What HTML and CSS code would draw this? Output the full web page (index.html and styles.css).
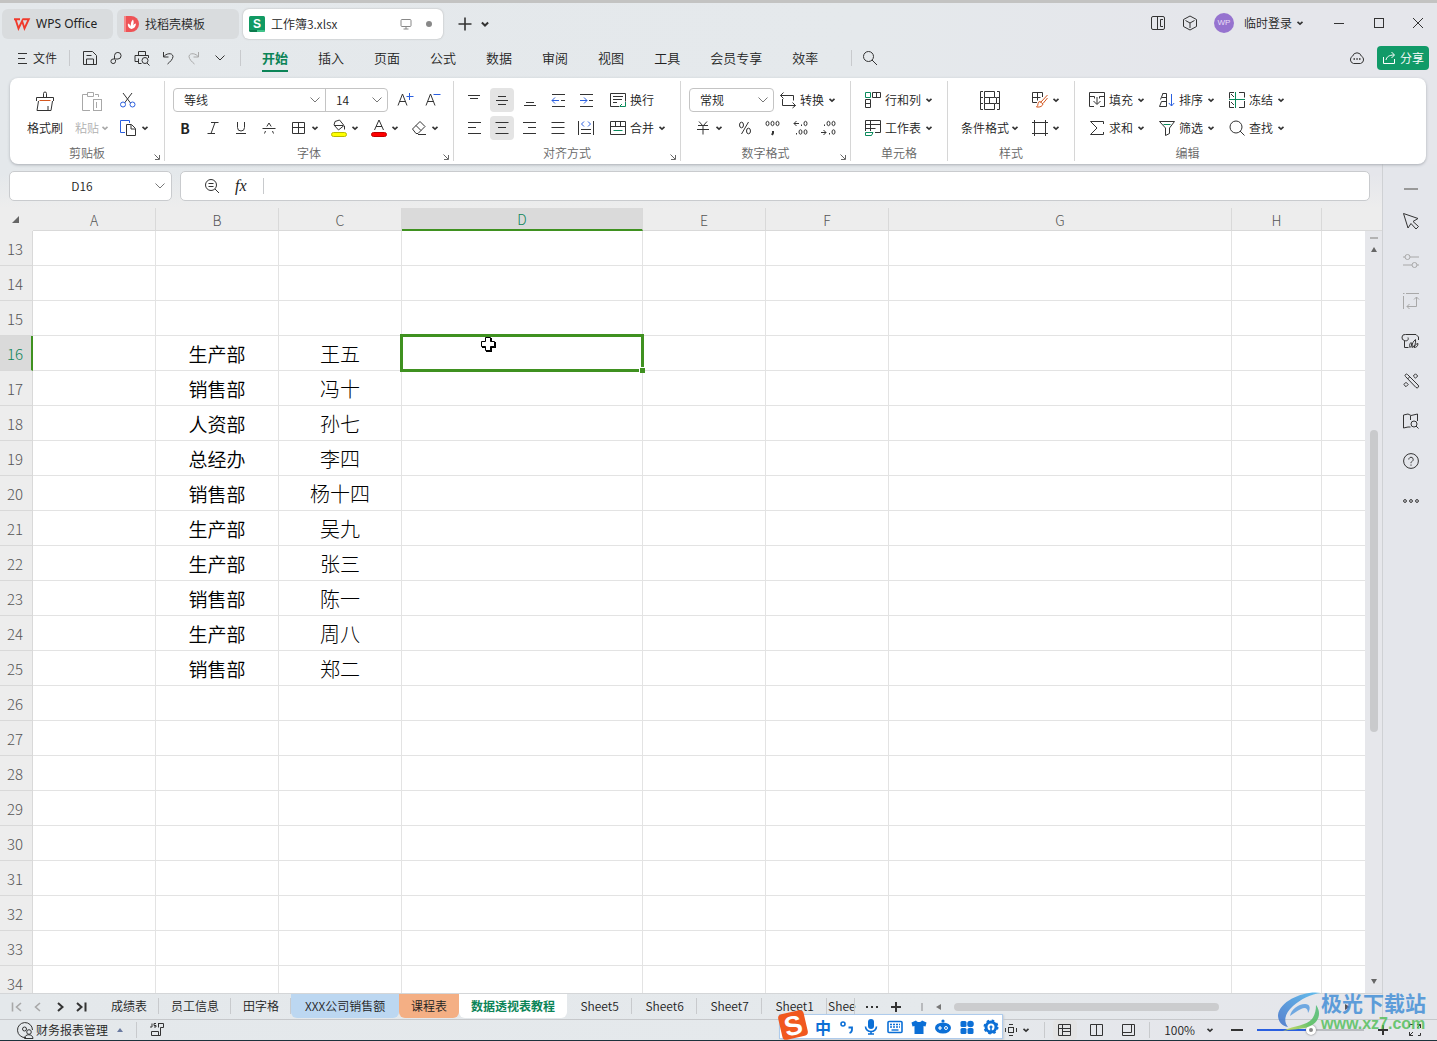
FILE: index.html
```html
<!DOCTYPE html>
<html lang="zh-CN">
<head>
<meta charset="utf-8">
<title>工作簿3.xlsx - WPS Office</title>
<link rel="stylesheet" href="styles.css">
</head>
<body>
<svg class="defs" aria-hidden="true">
  <symbol id="caret" viewBox="0 0 8 8"><path d="M1.5 2.8L4 5.2 6.5 2.8" stroke-width="1.6"/></symbol>
  <symbol id="chev" viewBox="0 0 12 12"><path d="M1.5 3.5L6 8l4.500-4.500"/></symbol>
  <symbol id="launch" viewBox="0 0 6 6"><path d="M.5 .5l4.500 4.500M5.500 1v4.500H1"/></symbol>
</svg>

<header class="titlebar">
  <button class="doc-tab tab-home">
    <svg width="16" height="12" viewBox="0 0 16 12"><path d="M0 1.200h6M1.500 1.200l3 9.300 3.600-7.500 2.400 7.500 4.300-9.300H8.500" stroke="#f03a2c" stroke-width="1.900"/></svg>
    <span>WPS Office</span>
  </button>
  <button class="doc-tab tab-docer">
    <svg width="16" height="16"><path d="M0 0h7a8 8 0 0 1 0 16H0z" fill="#ee5356" stroke="none"/><path d="M0 0h2v16H0z" fill="#f58b8b" stroke="none"/><path d="M7.500 13C4 12 3.500 9 4 7.500c1.500.5 2.500 1.500 3 3C6.500 8 7 5 9 3.500c1 2 .8 4 0 6 .8-1.200 1.800-1.800 3-2-.2 3-1.500 5-4.500 5.500z" fill="#fff" stroke="none"/></svg>
    <span>找稻壳模板</span>
  </button>
  <button class="doc-tab tab-file">
    <svg width="16" height="16"><rect width="16" height="16" rx="1.500" fill="#119a63" stroke="none"/><path d="M0 14h8v2H1.500z" fill="#0b7a4c" stroke="none"/><path d="M8 14h8l-1 2H8z" fill="#3fc389" stroke="none"/><text x="8" y="12" class="logo-s">S</text></svg>
    <span class="doc-name">工作簿3.xlsx</span>
    <svg class="dim" width="12" height="12"><rect x="1" y="1.500" width="10" height="7" rx="1"/><path d="M3.500 11h5M6 8.500V11"/></svg>
    <i class="dot"></i>
  </button>
  <button class="icon-btn new-tab" aria-label="新建"><svg width="14" height="14"><path d="M7 .5v13M.5 7h13" stroke-width="1.600"/></svg></button>
  <button class="icon-btn tab-list" aria-label="标签列表"><svg width="10" height="10"><use href="#caret"/></svg></button>
  <div class="window-tools">
    <button class="win-tool" aria-label="布局"><svg width="16" height="16"><rect x="1.500" y="1.500" width="13" height="13" rx="1.500"/><path d="M7.500 1.500v13M13 4.500h-2.500v7H13"/></svg></button>
    <button class="win-tool" aria-label="应用"><svg width="16" height="16"><path d="M8 1l6.500 3.500v7L8 15l-6.500-3.500v-7zM3.500 5.500L8 8l4.500-2.500M8 8v5"/></svg></button>
    <span class="avatar">WP</span>
    <button class="login">临时登录<svg width="8" height="8"><use href="#caret"/></svg></button>
    <button class="win-btn" aria-label="最小化"><svg width="12" height="12"><path d="M1 6.500h10"/></svg></button>
    <button class="win-btn" aria-label="最大化"><svg width="12" height="12"><rect x="1.500" y="1.500" width="9" height="9"/></svg></button>
    <button class="win-btn" aria-label="关闭"><svg width="12" height="12"><path d="M1 1l10 10M11 1L1 11"/></svg></button>
  </div>
</header>

<nav class="menubar">
  <button class="file-menu"><svg width="10" height="12"><path d="M1 1.500h9M1 6.500h7M1 11.500h9"/></svg>文件</button>
  <i class="bar"></i>
  <div class="quick">
    <button class="icon-btn" aria-label="保存"><svg width="16" height="16"><path d="M1.500 1.500h9l4 4v9h-13zM4.500 14v-5h7v5M4.500 5.500h5"/></svg></button>
    <button class="icon-btn" aria-label="输出"><svg width="14" height="14"><path d="M5.500 8V4.500a3.300 3.300 0 1 1 3.500 3.500H4a2.300 2.300 0 1 0 2.500 2.500V9"/></svg></button>
    <button class="icon-btn" aria-label="打印预览"><svg width="16" height="16"><path d="M4.500 5V1.500h7V5M4 11.500H1V5.500h13.500V8M4.500 8.500v5h3"/><circle cx="11" cy="10.500" r="3"/><path d="M13 13l2.500 2.500"/></svg></button>
    <button class="icon-btn" aria-label="撤销"><svg width="14" height="14"><path d="M2.500 1v5h5M2.500 6c2-3.500 9-5 9.500-.5C12 8 9 11 6.500 13"/></svg></button>
    <button class="icon-btn faint" aria-label="恢复"><svg width="14" height="14"><path d="M11.500 1v5h-5M11.500 6C9.500 2.500 2.500 1 2 5.500 2 8 5 11 7.500 13"/></svg></button>
    <button class="icon-btn" aria-label="更多"><svg width="12" height="12"><use href="#chev"/></svg></button>
  </div>
  <i class="bar"></i>
  <div class="menus">
    <a href="#" class="active">开始</a><a href="#">插入</a><a href="#">页面</a><a href="#">公式</a><a href="#">数据</a><a href="#">审阅</a><a href="#">视图</a><a href="#">工具</a><a href="#">会员专享</a><a href="#">效率</a>
  </div>
  <i class="bar"></i>
  <button class="icon-btn search" aria-label="搜索"><svg width="16" height="16"><circle cx="6.500" cy="6.500" r="5"/><path d="M10 10l5 5"/></svg></button>
  <button class="icon-btn cloud" aria-label="云同步"><svg width="16" height="14"><path d="M4.500 12.500a4 4 0 0 1-.8-7.500 4.500 4.500 0 0 1 8.600 0 4 4 0 0 1-.8 7.500z"/><path d="M4.500 8h1.500M7.300 8h1.500M10 8h1.500" stroke-width="1.400"/></svg></button>
  <button class="share"><svg width="14" height="14"><path d="M1.500 6v6.500h11V8M4 9c.5-3 3-5 8-5M9.500 1L12.500 4l-3 3"/></svg>分享</button>
</nav>

<section class="ribbon">
  <div class="group g-clip">
    <div class="tools">
      <button class="big"><svg width="20" height="20"><path d="M8.500 6.500V2.500a1.500 1.500 0 0 1 3 0v4M1.500 10V6.500h17V10M3.500 10l-1.500 9.500h14l1.500-9.500M13 15v4"/><path d="M4.500 9.500h11" stroke="#d4571f"/></svg><span>格式刷</span></button>
      <button class="big faint"><svg width="22" height="20"><path d="M7 3.500H1.500v16H9M14 3.500h3.500V6M6.500 1.500h6v4h-6z"/><rect x="12.500" y="8.500" width="8" height="11"/><path d="M15.500 11v6"/></svg><span>粘贴<svg width="8" height="8"><use href="#caret"/></svg></span></button>
      <div class="stack">
        <div class="row"><button class="tool" aria-label="剪切"><svg width="18" height="16"><path d="M4 1l7.500 10M13 1L5.500 11"/><circle cx="4" cy="12.500" r="2.500" stroke="#2a5fe0"/><circle cx="13.500" cy="12.500" r="2.500" stroke="#2a5fe0"/></svg></button></div>
        <div class="row"><button class="tool" aria-label="复制"><svg width="18" height="18"><path d="M6 13.500H1.500v-12h9V4" stroke="#2a5fe0"/><path d="M7.500 5.500h5l4 4v7h-9zM12 6v4h4"/></svg><svg width="8" height="8"><use href="#caret"/></svg></button></div>
      </div>
    </div>
    <div class="caption"><span>剪贴板</span><svg width="6" height="6"><use href="#launch"/></svg></div>
  </div>

  <div class="group g-font">
    <div class="tools stack">
      <div class="row">
        <div class="fontbox">
          <label class="pick font-name"><select aria-label="字体"><option>等线</option></select><svg width="12" height="12"><use href="#chev"/></svg></label>
          <label class="pick font-size"><select aria-label="字号"><option>14</option></select><svg width="12" height="12"><use href="#chev"/></svg></label>
        </div>
        <button class="sq" aria-label="增大字号"><svg width="16" height="16"><path d="M1 13.500L5.500 2 10 13.500M2.500 9.500h6"/><path d="M12.500 1v7M9.500 4.500h7" stroke="#2a5fe0"/></svg></button>
        <button class="sq" aria-label="减小字号"><svg width="16" height="16"><path d="M1 13.500L5.500 2 10 13.500M2.500 9.500h6"/><path d="M8.500 2.500h7" stroke="#2a5fe0"/></svg></button>
      </div>
      <div class="row">
        <button class="sq letter"><b>B</b></button>
        <button class="sq" aria-label="倾斜"><svg width="12" height="12"><path d="M4 .5h7.500M.5 11.500H8M8 .5L4 11.500"/></svg></button>
        <button class="sq" aria-label="下划线"><svg width="12" height="14"><path d="M2.500 1v5.500a3.500 3.500 0 0 0 7 0V1M1 12.500h10"/></svg></button>
        <button class="sq" aria-label="删除线"><svg width="14" height="12"><path d="M.5 6.500h13M4.800 4.500L7 1l2.200 3.500M3.500 9L2.500 11.500M10.500 9l1 2.500"/></svg></button>
        <button class="split" aria-label="边框"><svg width="16" height="16"><path d="M1.500 2.500h12v11h-12zM7.500 2.500v11M1.500 7.500h12"/></svg><svg width="8" height="8"><use href="#caret"/></svg></button>
        <button class="split" aria-label="填充颜色"><svg width="16" height="18"><path d="M4 2.500L8.500 1 13 6.500 7.500 11 3 6zM3 6.500h9M13.500 7v3.500"/><rect x=".5" y="13.500" width="15" height="4" rx="2" fill="#ff0" stroke="#b9b900"/></svg><svg width="8" height="8"><use href="#caret"/></svg></button>
        <button class="split" aria-label="字体颜色"><svg width="16" height="18"><path d="M3.500 11L8 1l4.500 10M5 7.500h6"/><rect x=".5" y="13.500" width="15" height="4" rx="2" fill="#f00" stroke="#c00000"/></svg><svg width="8" height="8"><use href="#caret"/></svg></button>
        <button class="split" aria-label="清除"><svg width="16" height="16"><path d="M9 1.500l5 5-7 7H5L1.500 9zM5 5.500l5 5M7 14.500h8"/></svg><svg width="8" height="8"><use href="#caret"/></svg></button>
      </div>
    </div>
    <div class="caption"><span>字体</span><svg width="6" height="6"><use href="#launch"/></svg></div>
  </div>

  <div class="group g-align">
    <div class="tools stack">
      <div class="row">
        <button class="al" aria-label="顶端对齐"><svg width="14" height="14"><path d="M1 2.500h12M3 5.500h8"/></svg></button>
        <button class="al on" aria-label="垂直居中"><svg width="14" height="14"><path d="M3 3.500h8M1 7.500h12M3 11.500h8"/></svg></button>
        <button class="al" aria-label="底端对齐"><svg width="14" height="14"><path d="M3 9.500h8M1 12.500h12"/></svg></button>
        <button class="al" aria-label="减少缩进"><svg width="14" height="14"><path d="M1 1.500h13M1 13.500h13M10 7.500h4"/><path d="M1 7.500h7M4 4.500L1 7.500l3 3" stroke="#2a5fe0"/></svg></button>
        <button class="al" aria-label="增加缩进"><svg width="14" height="14"><path d="M1 1.500h13M1 13.500h13M10 7.500h4"/><path d="M1 7.500h7M5 4.500l3 3-3 3" stroke="#2a5fe0"/></svg></button>
        <button class="tool wide"><svg width="16" height="16"><path d="M9 14.500H.5V1.500h15v8M3 4.500h10M3 7.500h9M3 10.500h4"/><path d="M15.500 10v4.500H10M12 12l-2.500 2.500" stroke="#0b8a5c"/></svg>换行</button>
      </div>
      <div class="row">
        <button class="al" aria-label="左对齐"><svg width="14" height="14"><path d="M1 1.500h13M1 6.500h8M1 12.500h13"/></svg></button>
        <button class="al on" aria-label="水平居中"><svg width="14" height="14"><path d="M.5 1.500h13M3 6.500h8M.5 12.500h13"/></svg></button>
        <button class="al" aria-label="右对齐"><svg width="14" height="14"><path d="M0 1.500h13M5 6.500h8M0 12.500h13"/></svg></button>
        <button class="al" aria-label="两端对齐"><svg width="14" height="14"><path d="M.5 1.500h13M.5 6.500h13M.5 12.500h13"/></svg></button>
        <button class="al" aria-label="分散对齐"><svg width="16" height="16"><path d="M.5 1v14M15.500 1v14M3 9.500h10M3 13.500h10"/><path d="M6 1.500L3.500 4 6 6.500M10 1.500L12.500 4 10 6.500" stroke="#2a5fe0"/></svg></button>
        <button class="tool wide"><svg width="16" height="14"><path d="M.5 .5h15v13H.5zM.5 5.500h15M5.500 .5v5M10.500 .5v5"/><path d="M3.500 9.500h9" stroke="#0b8a5c"/></svg>合并<svg width="8" height="8"><use href="#caret"/></svg></button>
      </div>
    </div>
    <div class="caption"><span>对齐方式</span><svg width="6" height="6"><use href="#launch"/></svg></div>
  </div>

  <div class="group g-number">
    <div class="tools stack">
      <div class="row">
        <label class="pick num-format"><select aria-label="数字格式"><option>常规</option></select><svg width="12" height="12"><use href="#chev"/></svg></label>
        <button class="tool convert"><svg width="16" height="16"><path d="M.5 3.500h13v5M3.500 .5l-3 3 3 3M2.500 7v6.500h13M12.500 10.500l3 3-3 2.500"/></svg>转换<svg width="8" height="8"><use href="#caret"/></svg></button>
      </div>
      <div class="row">
        <button class="split yen" aria-label="货币"><svg width="12" height="14"><path d="M2 .5l4 4.500 4-4.500M1 4.500h10M0 8.500h12M6 5v8.500"/></svg><svg width="8" height="8"><use href="#caret"/></svg></button>
        <button class="sq" aria-label="百分比"><svg width="14" height="14"><path d="M10.500 1L3.500 13"/><ellipse cx="3.500" cy="4" rx="2" ry="2.800"/><ellipse cx="10.500" cy="10" rx="2" ry="2.800"/></svg></button>
        <button class="sq" aria-label="千位分隔"><svg width="16" height="16"><ellipse cx="2.500" cy="3.500" rx="1.500" ry="2.200"/><ellipse cx="7.500" cy="3.500" rx="1.500" ry="2.200"/><ellipse cx="12.500" cy="3.500" rx="1.500" ry="2.200"/><path d="M8 11v2l-1 2" stroke-width="2"/></svg></button>
        <button class="sq" aria-label="增加小数位"><svg width="16" height="16"><path d="M1 3.500h5M3.500 1L1 3.500 3.500 6M8.500 4.500v1.500M3.500 13v1.500"/><ellipse cx="12.500" cy="3.500" rx="1.500" ry="2.200"/><ellipse cx="7.500" cy="12" rx="1.500" ry="2.200"/><ellipse cx="12.500" cy="12" rx="1.500" ry="2.200"/></svg></button>
        <button class="sq" aria-label="减少小数位"><svg width="16" height="16"><path d="M0 12.500h5M2.500 10L5 12.500 2.500 15M3.500 4.500v1.500M8.500 13v1.500"/><ellipse cx="7.500" cy="3.500" rx="1.500" ry="2.200"/><ellipse cx="12.500" cy="3.500" rx="1.500" ry="2.200"/><ellipse cx="12.500" cy="12" rx="1.500" ry="2.200"/></svg></button>
      </div>
    </div>
    <div class="caption"><span>数字格式</span><svg width="6" height="6"><use href="#launch"/></svg></div>
  </div>

  <div class="group g-cells">
    <div class="tools stack">
      <div class="row"><button class="tool"><svg width="16" height="16"><path d="M7.500 .5h8v5h-8zM11.500 .5v5M.5 7.500h5v8h-5zM.5 11.500h5"/><path d="M.5 .5h5v5h-5z" stroke="#0b8a5c"/></svg>行和列<svg width="8" height="8"><use href="#caret"/></svg></button></div>
      <div class="row"><button class="tool"><svg width="16" height="16"><path d="M.5 11V.5h15v12H10M.5 4.500h15M5.500 .5V11M.5 8.500h10"/><path d="M.5 12.500H8L6.500 15.500h-6z" stroke="#0b8a5c"/></svg>工作表<svg width="8" height="8"><use href="#caret"/></svg></button></div>
    </div>
    <div class="caption"><span>单元格</span></div>
  </div>

  <div class="group g-style">
    <div class="tools">
      <button class="big"><svg width="20" height="20"><path d="M3 .5H.5v18H3M17 .5h2.500v18H17M.5 6.500H3M.5 12.500H3M17 6.500h2.500M17 12.500h2.500M4.500 .5h10v6h-10zM4.500 12.500h10v6h-10zM4.500 6.500v6M9.500 6.500v6M14.500 6.500h2v6h-2"/></svg><span>条件格式<svg width="8" height="8"><use href="#caret"/></svg></span></button>
      <div class="stack">
        <div class="row"><button class="tool" aria-label="单元格样式"><svg width="16" height="16"><path d="M5 10.500H.5V.5h10V5M.5 5.500h8M5.500 .5v8"/><path d="M15.500 3l-7 7.500M15.500 6L11 11.500M8 9.500c-3 0-1 4-3.500 5.500 4 .5 6-1 6.500-3z" stroke="#d4571f"/></svg><svg width="8" height="8"><use href="#caret"/></svg></button></div>
        <div class="row"><button class="tool" aria-label="表格样式"><svg width="16" height="16"><path d="M2.500 0v16M13.500 0v16M0 2.500h16M0 13.500h16"/></svg><svg width="8" height="8"><use href="#caret"/></svg></button></div>
      </div>
    </div>
    <div class="caption"><span>样式</span></div>
  </div>

  <div class="group g-edit">
    <div class="tools stack">
      <div class="row">
        <button class="tool"><svg width="16" height="16"><path d="M5 14.500H.5v-14h15v14H11M.5 4.500h5M10.500 4.500h5M5.500 4.500v2M10.500 4.500v2M8 5v7M4.500 9L8 12.500 11.500 9"/></svg>填充<svg width="8" height="8"><use href="#caret"/></svg></button>
        <button class="tool"><svg width="16" height="16"><path d="M3.500 1.500h4v13M1.500 7.500L4 1.500M3 5.500h4.500M2.500 9.500h5M.5 14.500l2-5M.5 14.500h7"/><path d="M12.500 2v12M9.800 11l2.700 3 2.700-3" stroke="#2a5fe0"/></svg>排序<svg width="8" height="8"><use href="#caret"/></svg></button>
        <button class="tool"><svg width="16" height="16"><path d="M5 .5H.5v6M10 .5h5.500v5M.5 9v6.500H5M10 15.500h5.500V9M2 2l3 3M2 10l3 3"/><path d="M0 7.500h16M6.500 0v16" stroke="#0b8a5c"/></svg>冻结<svg width="8" height="8"><use href="#caret"/></svg></button>
      </div>
      <div class="row">
        <button class="tool"><svg width="16" height="16"><path d="M14.500 4V1.500h-13L8 8l-6.500 6.500h13V12"/></svg>求和<svg width="8" height="8"><use href="#caret"/></svg></button>
        <button class="tool"><svg width="16" height="16"><path d="M.5 1.500h15L10.500 8v5.500l-4 2V8z"/><path d="M4.500 4.500h7" stroke="#0b8a5c"/></svg>筛选<svg width="8" height="8"><use href="#caret"/></svg></button>
        <button class="tool"><svg width="16" height="16"><circle cx="7" cy="7" r="6"/><path d="M11 11l4.500 4.500"/></svg>查找<svg width="8" height="8"><use href="#caret"/></svg></button>
      </div>
    </div>
    <div class="caption"><span>编辑</span></div>
  </div>
</section>

<main class="work">
  <div class="book">
    <div class="formula">
      <label class="namebox"><input type="text" value="D16" aria-label="名称框"><svg width="12" height="12"><use href="#chev"/></svg></label>
      <label class="fxbox">
        <svg width="16" height="16"><circle cx="7" cy="7" r="5.500"/><path d="M4.500 5.500h5M4.500 8.500h5M11 11l4 4"/></svg>
        <em>fx</em><i class="bar"></i>
        <input type="text" aria-label="编辑栏">
      </label>
    </div>
    <div class="sheet">
      <div class="grid">
        <table>
          <colgroup><col class="c-num"><col class="c-s"><col class="c-s"><col class="c-s"><col class="c-d"><col class="c-s"><col class="c-s"><col class="c-g"><col class="c-h"><col></colgroup>
          <thead><tr><th><svg width="8" height="8"><path d="M7 0v7H0z" fill="#666" stroke="none"/></svg></th><th>A</th><th>B</th><th>C</th><th class="sel">D</th><th>E</th><th>F</th><th>G</th><th>H</th><th></th></tr></thead>
          <tbody>
            <tr><th>13</th><td></td><td></td><td></td><td></td><td></td><td></td><td></td><td></td><td></td></tr>
            <tr><th>14</th><td></td><td></td><td></td><td></td><td></td><td></td><td></td><td></td><td></td></tr>
            <tr><th>15</th><td></td><td></td><td></td><td></td><td></td><td></td><td></td><td></td><td></td></tr>
            <tr><th class="sel">16</th><td></td><td>生产部</td><td>王五</td><td class="current"><div class="cursor-box"><i class="handle"></i><svg class="pointer" width="16" height="16"><path d="M6 2h6v4h4v6h-4v4H6v-4H2V6h4z" fill="#000" stroke="none"/><path d="M5.500 1.500h5v4h4v5h-4v4h-5v-4h-4v-5h4z" fill="#fff" stroke="#000"/></svg></div></td><td></td><td></td><td></td><td></td><td></td></tr>
            <tr><th>17</th><td></td><td>销售部</td><td>冯十</td><td></td><td></td><td></td><td></td><td></td><td></td></tr>
            <tr><th>18</th><td></td><td>人资部</td><td>孙七</td><td></td><td></td><td></td><td></td><td></td><td></td></tr>
            <tr><th>19</th><td></td><td>总经办</td><td>李四</td><td></td><td></td><td></td><td></td><td></td><td></td></tr>
            <tr><th>20</th><td></td><td>销售部</td><td>杨十四</td><td></td><td></td><td></td><td></td><td></td><td></td></tr>
            <tr><th>21</th><td></td><td>生产部</td><td>吴九</td><td></td><td></td><td></td><td></td><td></td><td></td></tr>
            <tr><th>22</th><td></td><td>生产部</td><td>张三</td><td></td><td></td><td></td><td></td><td></td><td></td></tr>
            <tr><th>23</th><td></td><td>销售部</td><td>陈一</td><td></td><td></td><td></td><td></td><td></td><td></td></tr>
            <tr><th>24</th><td></td><td>生产部</td><td>周八</td><td></td><td></td><td></td><td></td><td></td><td></td></tr>
            <tr><th>25</th><td></td><td>销售部</td><td>郑二</td><td></td><td></td><td></td><td></td><td></td><td></td></tr>
            <tr><th>26</th><td></td><td></td><td></td><td></td><td></td><td></td><td></td><td></td><td></td></tr>
            <tr><th>27</th><td></td><td></td><td></td><td></td><td></td><td></td><td></td><td></td><td></td></tr>
            <tr><th>28</th><td></td><td></td><td></td><td></td><td></td><td></td><td></td><td></td><td></td></tr>
            <tr><th>29</th><td></td><td></td><td></td><td></td><td></td><td></td><td></td><td></td><td></td></tr>
            <tr><th>30</th><td></td><td></td><td></td><td></td><td></td><td></td><td></td><td></td><td></td></tr>
            <tr><th>31</th><td></td><td></td><td></td><td></td><td></td><td></td><td></td><td></td><td></td></tr>
            <tr><th>32</th><td></td><td></td><td></td><td></td><td></td><td></td><td></td><td></td><td></td></tr>
            <tr><th>33</th><td></td><td></td><td></td><td></td><td></td><td></td><td></td><td></td><td></td></tr>
            <tr><th>34</th><td></td><td></td><td></td><td></td><td></td><td></td><td></td><td></td><td></td></tr>
          </tbody>
        </table>
      </div>
      <div class="vscroll">
        <i class="splitter"></i>
        <svg width="8" height="6"><path d="M4 0l3 5H1z" fill="#666" stroke="none"/></svg>
        <div class="vtrack"><i class="vthumb"></i></div>
        <svg width="8" height="6"><path d="M4 5l3-5H1z" fill="#666" stroke="none"/></svg>
      </div>
    </div>
    <div class="sheetbar">
      <div class="sheet-nav">
        <button class="faint" aria-label="第一个"><svg width="12" height="12"><path d="M2.500 1.500v9M11 2L6.500 6l4.500 4" stroke-width="1.600"/></svg></button>
        <button class="faint" aria-label="上一个"><svg width="12" height="12"><path d="M8 2L3.500 6 8 10" stroke-width="1.600"/></svg></button>
        <button aria-label="下一个"><svg width="12" height="12"><path d="M4 2l4.500 4L4 10" stroke-width="2"/></svg></button>
        <button aria-label="最后一个"><svg width="12" height="12"><path d="M1 2l4.500 4L1 10M9.500 1.500v9" stroke-width="2"/></svg></button>
      </div>
      <div class="sheet-tabs">
        <button>成绩表</button><button>员工信息</button><button>田字格</button><button class="blue">XXX公司销售额</button><button class="orange">课程表</button><button class="active">数据透视表教程</button><button class="latin">Sheet5</button><button class="latin">Sheet6</button><button class="latin">Sheet7</button><button class="latin">Sheet1</button><button class="cut">Shee</button>
      </div>
      <button class="icon-btn more" aria-label="更多工作表"><svg width="14" height="4"><path d="M1 2h2M6 2h2M11 2h2" stroke-width="2"/></svg></button>
      <button class="icon-btn add" aria-label="新建工作表"><svg width="10" height="10"><path d="M5 0v10M0 5h10" stroke-width="2"/></svg></button>
      <i class="grip"></i>
      <svg class="larrow" width="6" height="8"><path d="M0 4l5-3v6z" fill="#777" stroke="none"/></svg>
      <div class="htrack"><i class="hthumb"></i></div>
      <svg class="rarrow" width="6" height="8"><path d="M6 4L1 1v6z" fill="#555" stroke="none"/></svg>
    </div>
  </div>
  <aside class="side">
    <button class="collapse" aria-label="收起"><svg width="14" height="2"><path d="M0 1h14" stroke="#999" stroke-width="2"/></svg></button>
    <button aria-label="选择"><svg width="18" height="18"><path d="M1.500 1.500l14.500 5-5 3 5.500 5-2.500 2.500-5-5.500-3 4.500z"/></svg></button>
    <button class="faint" aria-label="属性"><svg width="16" height="16"><circle cx="4.500" cy="4" r="2.500"/><circle cx="11.500" cy="12" r="2.500"/><path d="M0 4h2M7 4h9M0 12h9M14 12h2"/></svg></button>
    <button class="faint" aria-label="分析"><svg width="16" height="16"><path d="M0 .5h1.500M3 .5h13M.5 3v13M13.500 4v9.500H4M11 6.500l2.500-2.500L16 6.500M6.500 11L4 13.500 6.500 16"/></svg></button>
    <button aria-label="资源"><svg width="16" height="16"><path d="M1.500 7.500v7h4M1.500 7.500a3 3 0 0 1 1-6H13l2.500 2.500v3M1.500 7.500C4 8.500 6 7 5 4.500M7 14.500c-1-3 0-4 1-5 1 2 .8 3.500-1 5zM9 14.500c0-4 1-6 3.500-8 .5 4-.5 6.500-3.500 8zM11 14.500c1-2.500 2-3.500 4-4 0 2.500-1.500 4-4 4z"/></svg></button>
    <button aria-label="智能工具"><svg width="16" height="16"><path d="M2.500 3.500a1.400 1.400 0 0 1 2-2L15 12a1.400 1.400 0 0 1-2 2.500zM4.500 6l2-2"/><path d="M12.500 .8l2.200 2.200-2.200 2.200L10.300 3zM3 9.300l2.200 2.200L3 13.700.8 11.500z"/></svg></button>
    <button aria-label="查阅"><svg width="16" height="16"><path d="M7.500 14H5l-4.500 1V2L5 1l3 1.500L14.500 1v7M7.500 3v4"/><circle cx="11" cy="11" r="3"/><path d="M13 13l2.500 2.500"/></svg></button>
    <button aria-label="帮助"><svg width="16" height="16"><circle cx="8" cy="8" r="7.400"/><path d="M5.800 6.500a2.200 2.200 0 1 1 3.400 1.800C8.200 9 8 9.300 8 10.200M8 11.500v1.200"/></svg></button>
    <button aria-label="更多"><svg width="16" height="6"><circle cx="2" cy="3" r="1.400"/><circle cx="8" cy="3" r="1.400"/><circle cx="14" cy="3" r="1.400"/></svg></button>
  </aside>
</main>

<footer class="status">
  <button class="finance"><svg width="18" height="18"><path d="M10 16.500A7.500 7.500 0 1 1 16.500 9"/><circle cx="8.500" cy="8" r="2"/><circle cx="13" cy="11" r="2.300"/><path d="M8.500 17.500c0-5 8.500-5 8.500 0z"/></svg>财务报表管理<svg class="up" width="8" height="6"><path d="M4 1l3 4H1z" fill="#6a7aa0" stroke="none"/></svg></button>
  <i class="bar"></i>
  <button class="icon-btn script" aria-label="脚本"><svg width="14" height="14"><path d="M2 .5V4H0M6 .5H4v2h2V4H4M8 .5h5.500v4h-3v8H1.500V8.500h7v4M8.500 .5v4"/></svg></button>
  <div class="views">
    <button class="focus" aria-label="阅读模式"><svg width="14" height="14"><rect x="4.500" y="4.500" width="5" height="5"/><path d="M5 1.500h4M5 12.500h4M12.500 5v4M1.500 5v4"/></svg><svg width="8" height="8"><use href="#caret"/></svg></button>
    <i class="bar"></i>
    <button class="view on" aria-label="普通视图"><svg width="14" height="12"><path d="M.5 .5h12v11H.5zM.5 4.500h12M4.500 .5v11M4.500 7.500h8"/></svg></button>
    <button class="view" aria-label="分页预览"><svg width="14" height="12"><path d="M.5 .5h12v11H.5zM6.500 .5v11"/></svg></button>
    <button class="view" aria-label="页面布局"><svg width="14" height="12"><path d="M.5 .5h12v11H.5zM.5 8.500h9v-8"/></svg></button>
    <i class="bar"></i>
    <button class="zoom">100%<svg width="8" height="8"><use href="#caret"/></svg></button>
    <button class="icon-btn minus" aria-label="缩小"><svg width="12" height="2"><path d="M0 1h12" stroke-width="2"/></svg></button>
    <input type="range" min="0" max="100" value="50" aria-label="缩放">
    <button class="icon-btn plus" aria-label="放大"><svg width="10" height="10"><path d="M5 0v10M0 5h10" stroke-width="2"/></svg></button>
    <button class="icon-btn full" aria-label="全屏"><svg width="14" height="14"><path d="M9 1.500h3.500V5M12.500 1.500L9 5M5 12.500H1.500V9M1.500 12.500L5 9M1.500 4V1.500H5M12.500 10v2.500H10"/></svg></button>
  </div>
</footer>

<div class="ime">
  <svg class="ime-logo" width="32" height="30"><g transform="rotate(-13 16 15)"><rect x="3" y="2" width="26" height="26" rx="4" fill="#f1581f" stroke="none"/><text x="16" y="25" class="ime-s">S</text></g></svg>
  <b>中</b>
  <svg width="16" height="16"><circle cx="4" cy="5" r="2" stroke="#0b6fd6" stroke-width="1.600"/><path d="M9.500 8.500h3.500v2c0 2-1 3-2.500 3.500" stroke="#0b6fd6" stroke-width="1.800"/></svg>
  <svg width="16" height="16"><rect x="5" y="0" width="6" height="10" rx="3" fill="#0b6fd6" stroke="none"/><path d="M2.500 7.500a5.500 5 0 0 0 11 0M8 12.500V15M5 15h6" stroke="#0b6fd6" stroke-width="1.600"/></svg>
  <svg width="16" height="16"><rect x="1" y="2.500" width="14" height="11" rx="1" stroke="#0b6fd6" stroke-width="1.600"/><path d="M3 5.500h10M3 8h10" stroke="#0b6fd6" stroke-width="1.600" stroke-dasharray="2 1"/><path d="M4.500 11h7" stroke="#0b6fd6" stroke-width="1.400"/></svg>
  <svg width="16" height="16"><path d="M5 1.500c1.500 2 4.500 2 6 0l4.500 2-1 4-2-.5V15h-9V7l-2 .5-1-4z" fill="#0b6fd6" stroke="none"/></svg>
  <svg width="16" height="16"><circle cx="8" cy="2" r="1.600" fill="#0b6fd6" stroke="none"/><ellipse cx="8" cy="9" rx="8" ry="5.500" fill="#0b6fd6" stroke="none"/><path d="M3 9h4M5 7v4" stroke="#fff" stroke-width="1.200"/><circle cx="11" cy="9" r="1.500" stroke="#fff"/></svg>
  <svg width="16" height="16"><g fill="#0b6fd6" stroke="none"><rect x="1.500" y="2" width="6" height="6" rx="1.500"/><circle cx="11.500" cy="5" r="3.300"/><rect x="1.500" y="9" width="6" height="6" rx="1.500"/><rect x="8.500" y="9" width="6" height="6" rx="1.500"/></g></svg>
  <svg width="16" height="16"><circle cx="8" cy="8" r="5" stroke="#0b6fd6" stroke-width="3"/><circle cx="8" cy="8" r="6.500" stroke="#0b6fd6" stroke-width="2" stroke-dasharray="2.500 2.600"/><path d="M8 6.500v8M6.500 8h3" stroke="#0b6fd6" stroke-width="1.600"/></svg>
</div>

<div class="mark">
  <svg width="44" height="42"><defs><linearGradient id="leaf" x1="0" y1="1" x2="1" y2="0"><stop offset="0" stop-color="#d9dc4a"/><stop offset=".5" stop-color="#55bf5c"/><stop offset="1" stop-color="#4dbb78"/></linearGradient><linearGradient id="wave" x1="0" y1="1" x2="1" y2="0"><stop offset="0" stop-color="#3f6fc9"/><stop offset="1" stop-color="#4db8ee"/></linearGradient></defs>
    <path d="M43 2C28-1 2 9 0 24c0 7 4 11 10 12-5-6-3-14 5-21C23 8 33 3 43 2z" fill="url(#wave)" stroke="none"/>
    <path d="M12 25c1-6 8-12 15-12 5 0 6 4 3 9 0-5-3-6-7-4s-7 4-11 7z" fill="#5b9ee0" stroke="none"/>
    <path d="M38 14c6 8 3 18-8 22-8 3-18 2-25 4 12-6 23-5 29-12 3-4 4-9 4-14z" fill="url(#leaf)" stroke="none"/>
  </svg>
  <div><strong>极光下载站</strong><span>www.xz7.com</span></div>
</div>
</body>
</html>
```
FILE: styles.css
```css
* { box-sizing: border-box; }
html, body { height: 100%; }
body {
  margin: 0;
  display: flex;
  flex-direction: column;
  position: relative;
  overflow: hidden;
  border-top: 3px solid #c3c3c2;
  border-bottom: 1px solid #1d333d;
  background: linear-gradient(90deg, #e4e8eb 0%, #e5e9ec 60%, #e5e6eb 85%);
  color: #222;
  font: 350 12px/16px "Noto Sans CJK SC", sans-serif;
}
button, input, select { font: inherit; color: inherit; border: 0; padding: 0; margin: 0; background: none; outline: 0; }
button { display: flex; align-items: center; justify-content: center; flex: none; white-space: nowrap; }
a { color: inherit; text-decoration: none; }
svg { display: block; flex: none; fill: none; stroke: #333; stroke-width: 1; overflow: visible; }
.defs { position: absolute; width: 0; height: 0; }
.bar { flex: none; width: 1px; height: 16px; background: #c8cacd; }
.faint { color: #b0b0b0; }
.faint svg { stroke: #a8a8a8; }
.dim { stroke: #888; }

/* title bar */
.titlebar { flex: none; display: flex; align-items: center; height: 39px; padding: 3px 0 0 2px; }
.doc-tab { height: 30px; border-radius: 6px; background: #d9dcde; justify-content: flex-start; }
.tab-home { width: 111px; padding-left: 12px; gap: 6px; margin-right: 4px; font-family: "Noto Sans", sans-serif; font-weight: 400; }
.tab-docer { width: 122px; padding-left: 7px; gap: 5px; margin-right: 4px; }
.tab-file { width: 200px; padding: 0 11px 0 6px; gap: 6px; background: #fff; box-shadow: 0 0 2px #aaa; }
.doc-name { flex: 1; text-align: left; }
.tab-file .dim { margin-right: 4px; }
.dot { width: 6px; height: 6px; border-radius: 50%; background: #888; margin-left: 4px; }
.logo-s { font: bold 12px "Liberation Sans", sans-serif; fill: #fff; stroke: none; text-anchor: middle; }
.new-tab { width: 28px; margin-left: 8px; }
.tab-list { width: 12px; }
.window-tools { margin-left: auto; display: flex; align-items: center; padding-bottom: 2px; }
.win-tool { width: 32px; height: 32px; }
.avatar { width: 20px; height: 20px; margin: 0 10px 0 8px; border-radius: 50%; background: #9673cf; color: #e8def7; font: 8px/20px "Liberation Sans", sans-serif; text-align: center; }
.login { gap: 4px; margin-right: 15px; }
.win-btn { width: 40px; height: 32px; }
.win-btn:last-child { width: 38px; }

/* menu bar */
.menubar { flex: none; display: flex; align-items: center; height: 36px; padding: 0 8px 4px 17px; }
.file-menu { gap: 6px; margin-right: 12px; }
.quick { display: flex; margin: 0 7px 0 7px; }
.quick button { width: 26px; height: 24px; }
.menus { display: flex; gap: 30px; margin: 0 33px 0 21px; font-size: 13px; }
.menus a { line-height: 24px; border-bottom: 2px solid transparent; margin-top: 2px; }
.menus .active { color: #0b8457; font-weight: bold; border-color: #0b8457; }
.search { width: 36px; }
.cloud { margin-left: auto; margin-right: 12px; }
.share { width: 52px; height: 24px; gap: 4px; border-radius: 4px; background: #119a68; color: #fff; }
.share svg { stroke: #fff; }

/* ribbon */
.ribbon { flex: none; display: flex; height: 86px; margin: 0 11px 0 10px; border-radius: 8px; background: #fff; box-shadow: 0 1px 3px #a9adb3; position: relative; z-index: 1; }
.group { flex: none; display: flex; flex-direction: column; border-right: 1px solid transparent; border-image: linear-gradient(transparent 4px, #d6d6d6 4px, #d6d6d6 82px, transparent 82px) 1; }
.group:last-child { border-image: none; }
.g-clip { width: 155px; }
.g-font { width: 289px; }
.g-align { width: 227px; }
.g-number { width: 170px; }
.g-cells { width: 97px; }
.g-style { width: 127px; }
.g-edit { width: 226px; }
.tools { display: flex; height: 64px; padding-top: 8px; }
.g-clip .tools, .g-cells .tools, .g-edit .tools { padding-left: 14px; }
.g-font .tools { padding-left: 6px; }
.g-align .tools, .g-number .tools { padding-left: 8px; }
.g-style .tools { padding-left: 10px; }
.stack { display: flex; flex-direction: column; }
.row { display: flex; align-items: center; height: 28px; }
.caption { display: grid; height: 22px; line-height: 22px; color: #666; }
.caption > * { grid-area: 1 / 1; justify-self: center; }
.caption svg { justify-self: end; align-self: center; stroke: #666; margin: 7px 4px 0 0; }
.big { flex-direction: column; height: 56px; justify-content: flex-start; padding: 5px 3px 0; }
.big > span { display: flex; align-items: center; gap: 2px; height: 16px; margin-top: 9px; }
.g-clip .big + .big { margin-left: 6px; }
.g-clip .big + .stack { margin-left: 7px; }
.g-style .big + .stack { margin-left: 10px; }
.tool { gap: 4px; height: 24px; }
.sq { width: 28px; height: 24px; }
.letter { font-size: 14px; }
.split { width: 40px; height: 24px; padding-left: 8px; gap: 4px; justify-content: flex-start; }
.g-align .row { gap: 4px; }
.al { width: 24px; height: 24px; border-radius: 4px; }
.on { background: #e4e4e4; }
.wide { padding-left: 8px; }
.fontbox { display: flex; margin: 0 3px 0 2px; border: 1px solid #c4c4c4; border-radius: 4px; }
.pick { display: grid; align-items: center; height: 24px; }
.pick > * { grid-area: 1 / 1; }
.pick select { appearance: none; width: 100%; height: 100%; padding-left: 10px; }
.pick svg { justify-self: end; margin-right: 4px; stroke: #777; pointer-events: none; }
.fontbox .pick { height: 22px; }
.font-name { width: 152px; border-right: 1px solid #c4c4c4; }
.font-size { width: 61px; }
.num-format { width: 85px; border: 1px solid #c4c4c4; border-radius: 4px; margin-right: 6px; }
.yen { width: 42px; gap: 6px; }
.g-edit .tool { width: 70px; justify-content: flex-start; }

/* work area */
.work { flex: 1; min-height: 0; display: flex; }
.book { flex: 1; min-width: 0; display: flex; flex-direction: column; background: linear-gradient(transparent 0, transparent 10px, #ededed 44px); }
.formula { flex: none; display: flex; gap: 8px; padding: 7px 12px 7px 9px; }
.namebox, .fxbox { display: flex; align-items: center; height: 30px; border: 1px solid #c9cbce; border-radius: 5px; background: #fff; }
.namebox { width: 163px; padding-right: 5px; }
.namebox input { flex: 1; min-width: 0; text-align: center; }
.namebox svg { stroke: #777; }
.fxbox { flex: 1; padding-left: 23px; }
.fxbox em { width: 16px; margin: 0 12px 0 15px; font: italic 16px/20px "Liberation Serif", serif; }
.fxbox input { flex: 1; }
.sheet { flex: 1; min-height: 0; display: flex; overflow: hidden; }
.grid { flex: 1; min-width: 0; overflow: hidden; }
table { width: 100%; table-layout: fixed; border-collapse: separate; border-spacing: 0; background: #fff; }
.c-num { width: 33px; }
.c-s { width: 123px; }
.c-d { width: 241px; }
.c-g { width: 343px; }
.c-h { width: 90px; }
th, td { padding: 0; border-right: 1px solid #e3e3e3; border-bottom: 1px solid #e3e3e3; text-align: center; overflow: hidden; }
th:last-child, td:last-child { border-right: 0; }
th { background: #ededed; color: #555; font-size: 15px; font-weight: 300; border-color: #d9d9d9; }
thead th { height: 23px; line-height: 20px; font-size: 14px; padding-top: 2px; }
thead th:first-child { border-color: transparent; }
thead th svg { margin: 0 auto; }
thead .sel { background: #dadada; color: #0b8457; border-bottom: 2px solid #3f9120; line-height: 19px; }
tbody th { height: 35px; line-height: 20px; padding: 1px 2px 0 0; }
tbody .sel { background: #dadada; color: #0b8457; border-right: 2px solid #3f9120; padding-right: 1px; }
td { color: #000; font-size: 19px; line-height: 28px; padding-top: 2px; }
td:nth-child(4) { font-size: 20px; font-weight: 300; }
.current { position: relative; overflow: visible; padding: 0; }
.cursor-box { position: absolute; inset: -2px; border: 3px solid #3f9120; }
.handle { position: absolute; right: -4px; bottom: -4px; width: 6px; height: 6px; background: #3f9120; border: solid #fff; border-width: 1px 0 0 1px; }
.pointer { position: absolute; left: 77px; top: -1px; }
.vscroll { width: 17px; margin-top: 23px; display: flex; flex-direction: column; align-items: center; background: #e6e7eb; box-shadow: 0 -1px #d9d9d9; padding: 6px 0 8px; }
.splitter { width: 8px; height: 2px; background: #b3b3b3; margin-bottom: 8px; }
.vtrack { flex: 1; padding-top: 177px; }
.vthumb { display: block; width: 8px; height: 302px; border-radius: 4px; background: #c9cacc; }

/* sheet tabs */
.sheetbar { flex: none; display: flex; align-items: center; height: 26px; border-top: 1px solid #d4d6d8; background: linear-gradient(90deg, #e4e8eb 0%, #e5e9ec 70%, #e5e6eb 100%); }
.sheet-nav { display: flex; width: 99px; padding-left: 5px; }
.sheet-nav button { width: 22px; height: 24px; }
.sheet-tabs { display: flex; align-self: stretch; }
.sheet-tabs button { height: 24px; padding: 0 12px; position: relative; border-radius: 0 0 6px 6px; }
.sheet-tabs button:not(.blue, .orange, .active)::after { content: ""; position: absolute; right: 0; top: 4px; width: 1px; height: 16px; background: #c8cacd; }
.sheet-tabs .blue { min-width: 108px; background: #bcd7f1; }
.sheet-tabs .orange { background: #f4af84; }
.sheet-tabs .active { background: #fff; color: #0b8457; font-weight: bold; }
.sheet-tabs .latin { width: 65px; }
.sheet-tabs .cut { width: 28px; padding: 0 0 0 1px; justify-content: flex-start; }
.more { width: 34px; }
.add { width: 14px; }
.grip { width: 2px; height: 8px; margin: 0 13px 0 18px; background: #b8babd; }
.htrack { flex: 1; margin-left: 12px; }
.hthumb { display: block; width: 68%; height: 8px; border-radius: 4px; background: #cbccce; }
.rarrow { margin-right: 32px; }

/* side pane */
.side { flex: none; width: 55px; border-left: 1px solid #cfd1d4; display: flex; flex-direction: column; align-items: center; padding: 12px 0 0 2px; background: #e4e6eb; }
.side button { width: 40px; height: 40px; }
.side .collapse { height: 25px; }

/* status bar */
.status { flex: none; display: flex; align-items: center; height: 21px; padding-left: 16px; border-top: 1px solid #c6c8cb; }
.finance { gap: 2px; }
.finance .up { margin-left: 6px; }
.status > .bar { margin: 0 13px 0 12px; }
.views { margin-left: auto; display: flex; align-items: center; }
.focus { gap: 4px; margin-right: 14px; }
.view { width: 24px; height: 20px; border-radius: 4px; margin: 0 4px; }
.focus + .bar + .view { margin-left: 8px; }
.view + .bar { margin: 0 14px 0 4px; }
.zoom { gap: 11px; margin-right: 17px; }
.views input { appearance: none; width: 107px; height: 12px; margin: 0 14px; background: linear-gradient(90deg, #2a5fe0 50%, #b9bbc0 50%) center / 100% 2px no-repeat; }
.views input::-webkit-slider-thumb { appearance: none; width: 10px; height: 10px; border-radius: 50%; border: 3px solid #fff; background: #888; box-shadow: 0 0 2px #666; }
.full { margin: 0 15px 0 20px; }

/* input method bar */
.ime { position: absolute; left: 779px; bottom: 1px; display: flex; align-items: center; gap: 8px; width: 224px; height: 25px; padding-left: 35px; background: #fff; border: 1px solid #aecbec; box-shadow: 1px 1px 2px #c8ccd2; }
.ime b { width: 16px; font-size: 16px; color: #0b6fd6; text-align: center; }
.ime-logo { position: absolute; left: -3px; bottom: -2px; }
.ime-s { font: bold 27px "Liberation Sans", sans-serif; fill: #fff; stroke: none; text-anchor: middle; }

/* site mark */
.mark { position: absolute; right: 11px; bottom: 7px; display: flex; align-items: center; opacity: 0.85; pointer-events: none; }
.mark div { display: flex; flex-direction: column; margin-left: -1px; }
.mark strong { font-size: 21px; line-height: 25px; color: #4590d6; }
.mark span { font: bold 16px/18px "Liberation Sans", sans-serif; color: #56c05e; }
```
